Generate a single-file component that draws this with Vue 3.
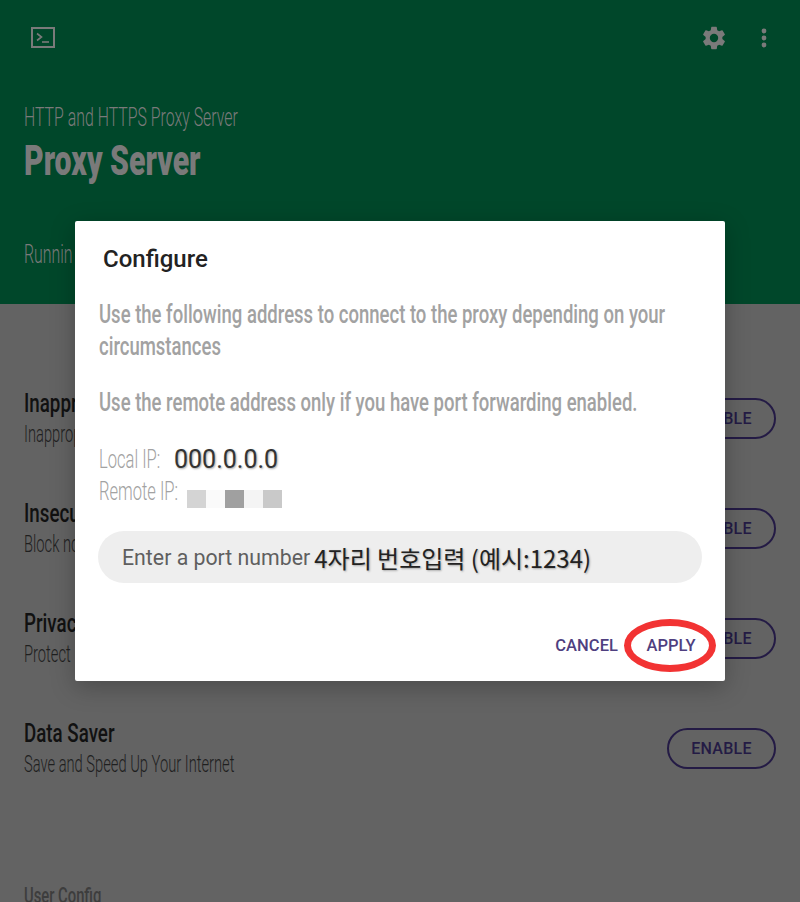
<script setup>
const rows = [
  { title: 'Inappro', sub: 'Inapprop' },
  { title: 'Insecu', sub: 'Block no' },
  { title: 'Privac', sub: 'Protect' },
  { title: 'Data Saver', sub: 'Save and Speed Up Your Internet' }
]
</script>

<template>
  <div class="page">
    <header class="hero">
      <div class="toolbar">
        <svg class="term" viewBox="0 0 26 22" width="26" height="22" fill="none" stroke="#7a7a7a" stroke-width="2">
          <rect x="1" y="1" width="22" height="19" />
          <path d="M6 6.5l4.5 3.5L6 13.5" stroke-width="1.6" />
          <path d="M11 15h7" stroke-width="1.6" />
        </svg>
        <div class="tools">
          <svg viewBox="0 0 24 24" width="28" height="28" fill="#7a7a7a">
            <path d="M19.14 12.94c.04-.3.06-.61.06-.94 0-.32-.02-.64-.07-.94l2.03-1.58a.49.49 0 0 0 .12-.61l-1.92-3.32a.49.49 0 0 0-.59-.22l-2.39.96c-.5-.38-1.03-.7-1.62-.94l-.36-2.54a.48.48 0 0 0-.48-.41h-3.84c-.24 0-.43.17-.47.41l-.36 2.54c-.59.24-1.13.57-1.62.94l-2.39-.96c-.22-.08-.47 0-.59.22L2.74 8.87c-.12.21-.08.47.12.61l2.03 1.58c-.05.3-.09.63-.09.94s.02.64.07.94l-2.03 1.58a.49.49 0 0 0-.12.61l1.92 3.32c.12.22.37.29.59.22l2.39-.96c.5.38 1.03.7 1.62.94l.36 2.54c.05.24.24.41.48.41h3.84c.24 0 .44-.17.47-.41l.36-2.54c.59-.24 1.13-.56 1.62-.94l2.39.96c.22.08.47 0 .59-.22l1.92-3.32c.12-.22.07-.47-.12-.61l-2.01-1.58zM12 15.6A3.6 3.6 0 1 1 12 8.4a3.6 3.6 0 0 1 0 7.2z" />
          </svg>
          <svg viewBox="0 0 6 22" width="6" height="22" fill="#7a7a7a">
            <circle cx="3" cy="4" r="2.4" /><circle cx="3" cy="11" r="2.4" /><circle cx="3" cy="18" r="2.4" />
          </svg>
        </div>
      </div>
      <p class="eyebrow"><span class="cond light">HTTP and HTTPS Proxy Server</span></p>
      <h1 class="brand"><span class="cond black">Proxy Server</span></h1>
      <p class="status"><span class="cond light">Runnin</span></p>
    </header>

    <main class="list">
      <div v-for="r in rows" :key="r.title" class="row">
        <div class="row-text">
          <div class="row-title"><span class="cond medium">{{ r.title }}</span></div>
          <div class="row-sub"><span class="cond light">{{ r.sub }}</span></div>
        </div>
        <button class="enable">ENABLE</button>
      </div>
      <div class="user-config"><span class="cond medium">User Config</span></div>
    </main>

    <section class="dialog">
      <h2 class="dlg-title">Configure</h2>
      <p class="dlg-copy first"><span class="cond medium">Use the following address to connect to the proxy depending on your<br />circumstances</span></p>
      <p class="dlg-copy second"><span class="cond medium">Use the remote address only if you have port forwarding enabled.</span></p>
      <div class="ip-row local">
        <span class="ip-label"><span class="cond light">Local IP:</span></span>
        <span class="ip-value">000.0.0.0</span>
      </div>
      <div class="ip-row remote">
        <span class="ip-label"><span class="cond light">Remote IP:</span></span>
        <span class="mosaic">
          <i style="background:#d4d4d4"></i><i style="background:#fafafa"></i><i style="background:#a0a0a0"></i><i style="background:#f4f4f4"></i><i style="background:#c9c9c9"></i>
        </span>
      </div>
      <div class="port">
        <span class="placeholder">Enter a port number</span>
        <span class="hint">4자리 번호입력 (예시:1234)</span>
      </div>
      <div class="actions">
        <button class="action">CANCEL</button>
        <button class="action apply">APPLY</button>
      </div>
    </section>
  </div>
</template>

<style>
html, body { margin: 0; background: #636363; }
</style>

<style scoped>
.page {
  position: relative;
  width: 800px;
  height: 902px;
  overflow: hidden;
  background: #636363;
  font-family: "Liberation Sans", Arial, sans-serif;
}
.cond {
  display: inline-block;
  font-family: Roboto, "Liberation Sans", sans-serif;
  transform-origin: left center;
  white-space: nowrap;
}
.light { font-weight: 300; }
.medium { font-weight: 500; }
.black { font-weight: 900; }
.hero {
  height: 304px;
  box-sizing: border-box;
  padding: 24px 24px 0;
  background: #00472a;
  color: #7a7a7a;
}
.toolbar {
  display: flex;
  align-items: center;
  justify-content: space-between;
  height: 28px;
  padding: 0 9px 0 7px;
}
.tools { display: flex; align-items: center; gap: 33px; }
.eyebrow { margin: 50px 0 0; font-size: 25px; line-height: 30px; }
.eyebrow .cond { transform: scaleX(.635); }
.brand { margin: 5px 0 0; font-size: 42px; line-height: 46px; }
.brand .cond { transform: scaleX(.72); }
.status { margin: 55px 0 0; font-size: 25px; line-height: 30px; }
.status .cond { transform: scaleX(.635); }
.list { padding: 83px 24px 0; }
.row {
  display: flex;
  align-items: center;
  justify-content: space-between;
  height: 62px;
  margin-bottom: 48px;
}
.row-text { padding-top: 2px; }
.row-title { font-size: 25px; line-height: 30px; color: #111; }
.row-title .cond { transform: scaleX(.75); }
.row-sub { font-size: 23px; line-height: 30px; color: #1f1f1f; }
.row-sub .cond { transform: scaleX(.639); }
.enable {
  width: 109px;
  height: 41px;
  box-sizing: border-box;
  border: 2px solid #241b45;
  border-radius: 21px;
  background: transparent;
  color: #241b45;
  font: 500 16px Roboto, sans-serif;
  letter-spacing: .3px;
}
.user-config { margin-top: 103px; font-size: 22px; line-height: 28px; color: #3d3d3d; }
.user-config .cond { transform: scaleX(.672); }
.dialog {
  position: absolute;
  left: 75px;
  top: 221px;
  width: 650px;
  height: 460px;
  box-sizing: border-box;
  padding: 24px 23px 0;
  border-radius: 2px;
  background: #fff;
  box-shadow: 0 6px 24px rgba(0, 0, 0, .25);
}
.dlg-title { margin: 0 0 0 5px; font: 500 24px/28px Roboto, sans-serif; color: #222; }
.dlg-copy { margin: 0 0 0 1px; font-size: 26px; line-height: 32px; color: #a2a2a2; }
.dlg-copy .cond { transform: scaleX(.712); }
.dlg-copy.first { margin-top: 25px; height: 64px; }
.dlg-copy.second { margin-top: 24px; }
.ip-row { display: flex; align-items: center; height: 32.5px; margin-left: 1px; }
.ip-row.local { margin-top: 25px; }
.ip-label { font-size: 25px; color: #a2a2a2; }
.ip-label .cond { transform: scaleX(.662); }
.local .ip-label { width: 75px; }
.remote .ip-label { width: 88px; }
.ip-value { font: 400 25px Roboto, sans-serif; color: #333; text-shadow: 1px 1px 2px rgba(0, 0, 0, .35); }
.mosaic { display: flex; margin-top: 15px; }
.mosaic i { display: block; width: 19px; height: 18px; }
.port {
  display: flex;
  align-items: center;
  height: 52px;
  margin-top: 23px;
  padding-left: 24px;
  border-radius: 26px;
  background: #eeeeee;
  gap: 4px;
}
.placeholder { font: 400 21.3px Roboto, sans-serif; color: #5f5f5f; }
.hint { font: 400 24px "Noto Sans CJK KR", Roboto, sans-serif; color: #222; text-shadow: 1px 1px 2px rgba(0, 0, 0, .3); }
.actions {
  position: absolute;
  right: 0;
  top: 398px;
  display: flex;
  align-items: center;
}
.action {
  border: 0;
  padding: 0;
  background: transparent;
  color: #4f3f80;
  font: 500 16.5px Roboto, sans-serif;
  letter-spacing: .05px;
}
.apply {
  box-sizing: border-box;
  width: 92px;
  height: 53px;
  margin: 0 9px 0 6px;
  padding-left: 2px;
  border: 7px solid #f23333;
  border-radius: 50%;
}
</style>
